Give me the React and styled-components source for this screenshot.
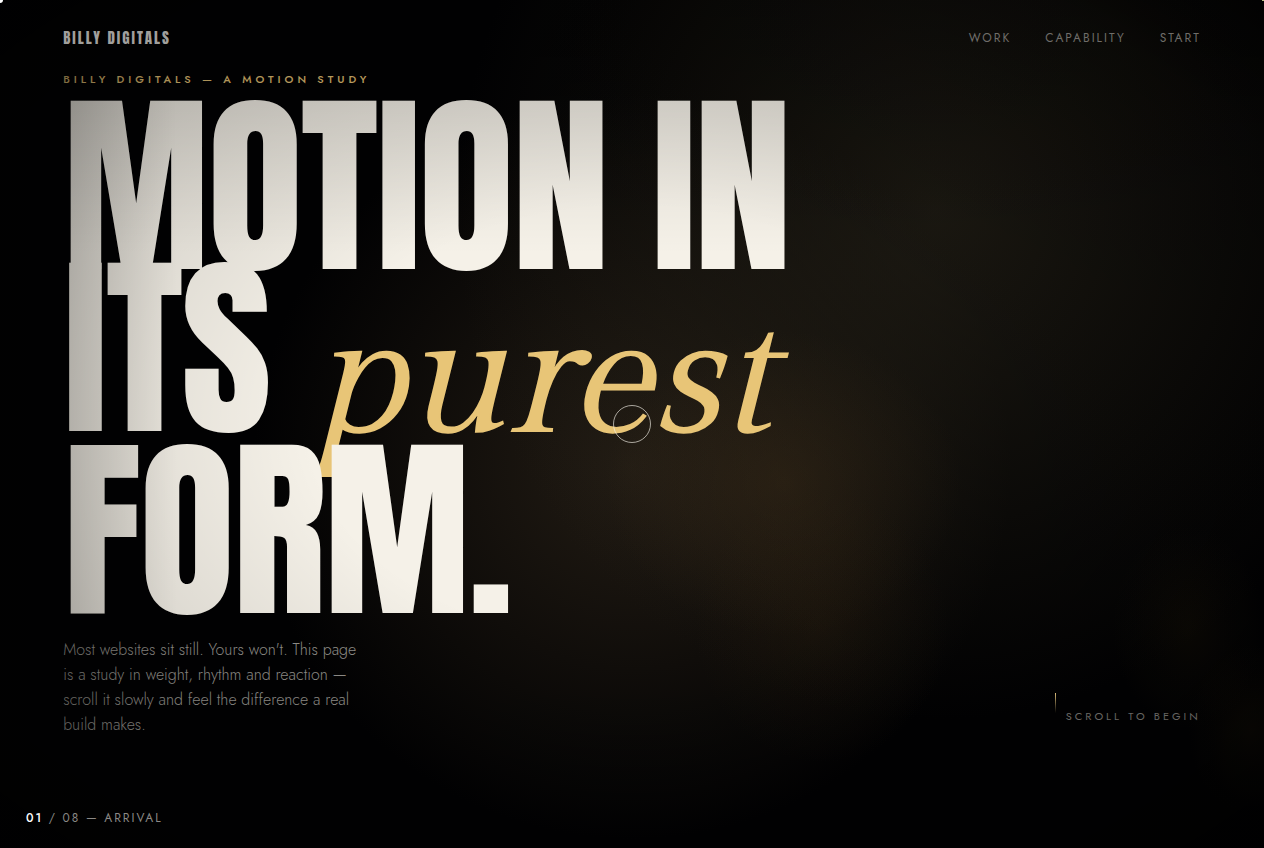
import React from 'react';
import styled, { createGlobalStyle } from 'styled-components';

const GlobalStyle = createGlobalStyle`
  * {
    box-sizing: border-box;
  }

  body {
    margin: 0;
    background: #000;
    color: #f5f1e8;
    font-family: "Jost", "Lato", sans-serif;
    -webkit-font-smoothing: antialiased;
  }
`;

const Page = styled.div`
  position: relative;
  display: flex;
  flex-direction: column;
  min-height: 100vh;
  overflow: hidden;
  background:
    radial-gradient(ellipse 14% 18% at 62% 57%, rgba(84, 60, 30, 0.26), transparent),
    radial-gradient(ellipse 10% 16% at 65% 74%, rgba(60, 42, 18, 0.22), transparent),
    radial-gradient(ellipse 6% 12% at 94% 74%, rgba(48, 38, 14, 0.2), transparent),
    radial-gradient(ellipse 5% 10% at 99% 86%, rgba(48, 38, 14, 0.18), transparent),
    radial-gradient(ellipse 38% 60% at 74% 25%, rgba(38, 34, 24, 0.7), transparent),
    radial-gradient(ellipse 30% 44% at 50% 55%, rgba(42, 34, 24, 0.8), transparent),
    #010102;
`;

const Vignette = styled.div`
  position: absolute;
  inset: 0;
  pointer-events: none;
  background:
    linear-gradient(90deg, rgba(0, 0, 0, 0.3), transparent 14%),
    linear-gradient(rgba(0, 0, 0, 0.16), transparent 30%),
    radial-gradient(
      ellipse at center,
      transparent 36%,
      rgba(0, 0, 0, 0.1) 62%,
      rgba(0, 0, 0, 0.2) 84%,
      rgba(0, 0, 0, 0.7) 100%
    );
`;

const Header = styled.header`
  position: relative;
  z-index: 2;
  display: flex;
  align-items: center;
  justify-content: space-between;
  height: 67px;
  padding: 8px 5vw 0;
`;

const Logo = styled.a`
  font-family: "Anton", "Roboto Condensed", sans-serif;
  font-size: 15px;
  font-weight: 400;
  line-height: 24px;
  letter-spacing: 2px;
  text-transform: uppercase;
  text-decoration: none;
  color: #a09f9c;
`;

const Nav = styled.nav`
  display: flex;
  gap: 34px;
`;

const NavLink = styled.a`
  font-size: 12px;
  line-height: 16px;
  letter-spacing: 2px;
  text-transform: uppercase;
  text-decoration: none;
  color: #6f6d69;
`;

const Hero = styled.main`
  flex: 1;
  padding: 0 5vw;
`;

const Eyebrow = styled.p`
  margin: 0;
  font-size: 11px;
  font-weight: 500;
  line-height: 24px;
  letter-spacing: 4px;
  text-transform: uppercase;
  color: #e8c577;
`;

const Title = styled.h1`
  margin: 0;
  padding-top: 14px;
  font-family: "Anton", "Roboto Condensed", sans-serif;
  font-size: 196px;
  font-weight: 400;
  line-height: 162px;
  letter-spacing: -0.01em;
  text-transform: uppercase;
  white-space: nowrap;
  color: #f5f1e8;
`;

const TitleLine = styled.span`
  display: flex;
  align-items: baseline;
  gap: 42px;
  height: ${props => (props.$tall ? '182px' : '162px')};
`;

const Accent = styled.em`
  font-family: "Gilda Display", "Liberation Serif", serif;
  font-size: 164px;
  font-style: italic;
  font-weight: 400;
  letter-spacing: normal;
  text-transform: none;
  color: #e8c577;
  -webkit-text-stroke: 2px #e8c577;
`;

const HeroFoot = styled.div`
  display: flex;
  align-items: flex-end;
  justify-content: space-between;
  padding-top: 26px;
`;

const Lead = styled.p`
  margin: 0;
  max-width: 300px;
  font-size: 16px;
  font-weight: 300;
  line-height: 25px;
  color: #94928d;
`;

const ScrollCue = styled.div`
  display: flex;
  align-items: flex-start;
  gap: 10px;
  height: 44px;
  font-size: 11px;
  line-height: 46px;
  letter-spacing: 3px;
  text-transform: uppercase;
  color: #7a7874;
`;

const CueLine = styled.span`
  width: 1px;
  height: 20px;
  background: linear-gradient(#f5d488, transparent);
`;

const Chapter = styled.footer`
  position: relative;
  z-index: 2;
  padding: 0 26px 22px;
  font-size: 12px;
  line-height: 16px;
  letter-spacing: 2px;
  text-transform: uppercase;
  color: #8b8986;

  b {
    font-weight: 500;
    color: #fff;
  }
`;

const CursorRing = styled.span`
  position: absolute;
  top: 50%;
  left: 50%;
  z-index: 3;
  width: 38px;
  height: 38px;
  border: 1px solid rgba(245, 241, 232, 0.65);
  border-radius: 50%;
  transform: translate(-50%, -50%);
  pointer-events: none;
`;

const CursorDot = styled.span`
  position: absolute;
  top: -3px;
  left: -3px;
  z-index: 3;
  width: 6px;
  height: 6px;
  border-radius: 50%;
  background: #fff;
`;

const Progress = styled.span`
  position: absolute;
  top: 0;
  right: 0;
  z-index: 3;
  width: 2px;
  height: 1px;
  background: #b9bf84;
`;

const links = [
  { label: 'Work', href: '#work' },
  { label: 'Capability', href: '#capability' },
  { label: 'Start', href: '#start' },
];

const App = () => {
  return (
    <>
      <GlobalStyle />
      <Page>
        <Header>
          <Logo href="#top">Billy Digitals</Logo>
          <Nav>
            {links.map(link => (
              <NavLink key={link.href} href={link.href}>{link.label}</NavLink>
            ))}
          </Nav>
        </Header>

        <Hero>
          <Eyebrow>Billy Digitals — A Motion Study</Eyebrow>
          <Title>
            <TitleLine>Motion in</TitleLine>
            <TitleLine $tall>
              Its <Accent>purest</Accent>
            </TitleLine>
            <TitleLine>Form.</TitleLine>
          </Title>
          <HeroFoot>
            <Lead>
              Most websites sit still. Yours won't. This page is a study in weight, rhythm and
              reaction — scroll it slowly and feel the difference a real build makes.
            </Lead>
            <ScrollCue>
              <CueLine />
              Scroll to begin
            </ScrollCue>
          </HeroFoot>
        </Hero>

        <Chapter>
          <b>01</b> / 08 — Arrival
        </Chapter>

        <Vignette />
        <CursorRing />
        <CursorDot />
        <Progress />
      </Page>
    </>
  );
};

export default App;
